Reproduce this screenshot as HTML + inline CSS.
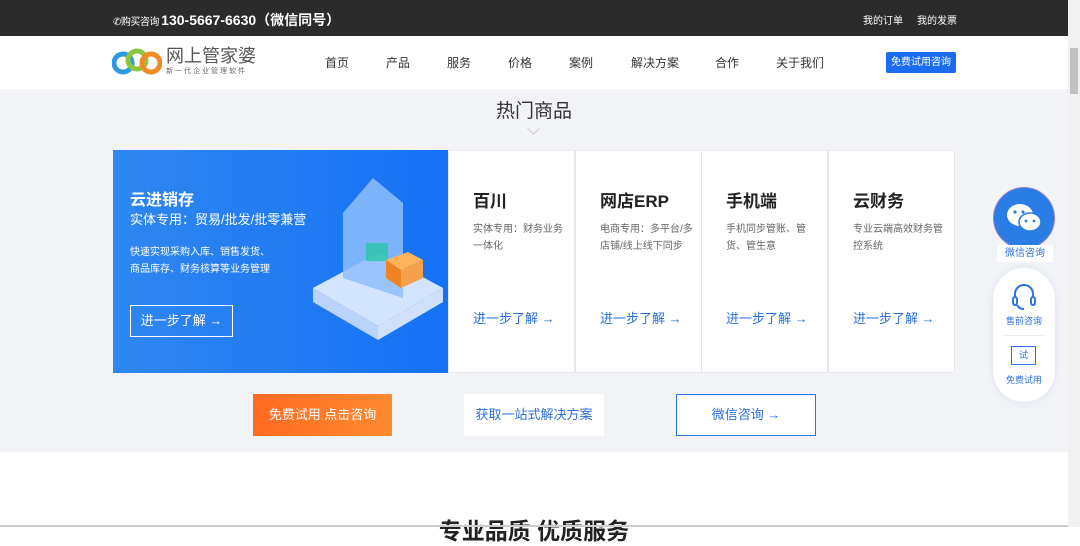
<!DOCTYPE html>
<html><head><meta charset="utf-8"><style>
*{margin:0;padding:0;box-sizing:border-box}
body{width:1080px;height:527px;overflow:hidden;position:relative;background:#fff;font-family:"Liberation Sans","Noto Sans CJK SC",sans-serif;color:#333}
.abs{position:absolute}
.top{left:0;top:0;width:1068px;height:36px;background:#2b2b2b;color:#fff}
.hdr{left:0;top:36px;width:1068px;height:53px;background:#fff;box-shadow:0 1px 3px rgba(0,0,0,.08)}
.grey{left:0;top:89px;width:1068px;height:363px;background:#f2f3f6}
.nav{font-size:12px;color:#333;top:54px}
.card{background:#fff;border:1px solid #e6e8ec;top:150px;height:223px;width:127px}
.card h3{position:absolute;left:24px;top:36px;font-size:17px;font-weight:bold;color:#222}
.card p{position:absolute;left:24px;top:70px;font-size:10px;line-height:17px;color:#666;width:96px}
.card .m{position:absolute;left:24px;top:157px;font-size:13px;color:#2a6fe0}
.scroll{left:1068px;top:0;width:12px;height:527px;background:#f1f1f1}
</style></head><body>
<div class="abs top">
 <div class="abs" style="left:113px;top:10px;font-size:10px;letter-spacing:-0.5px">&#9990;购买咨询 <span style="font-size:14px;font-weight:bold;letter-spacing:0">130-5667-6630（微信同号）</span></div>
 <div class="abs" style="left:863px;top:12px;font-size:10px">我的订单</div>
 <div class="abs" style="left:917px;top:12px;font-size:10px">我的发票</div>
</div>
<div class="abs hdr"></div>
<svg class="abs" style="left:112px;top:46px" width="50" height="32" viewBox="0 0 50 32">
<circle cx="11" cy="17" r="9" fill="none" stroke="#2d9be0" stroke-width="5"/>
<circle cx="25" cy="14" r="9" fill="none" stroke="#8cc63f" stroke-width="5"/>
<circle cx="39" cy="17" r="9" fill="none" stroke="#f08a24" stroke-width="5"/>
</svg>
<div class="abs" style="left:166px;top:42px;font-size:18px;color:#555">网上管家婆</div>
<div class="abs" style="left:166px;top:66px;font-size:7px;color:#666;letter-spacing:2px">新一代企业管理软件</div>
<div class="abs nav" style="left:325px">首页</div>
<div class="abs nav" style="left:386px">产品</div>
<div class="abs nav" style="left:447px">服务</div>
<div class="abs nav" style="left:508px">价格</div>
<div class="abs nav" style="left:569px">案例</div>
<div class="abs nav" style="left:631px">解决方案</div>
<div class="abs nav" style="left:715px">合作</div>
<div class="abs nav" style="left:776px">关于我们</div>
<div class="abs" style="left:886px;top:52px;width:70px;height:21px;background:#1a6cf0;color:#fff;font-size:10px;line-height:21px;text-align:center;border-radius:2px">免费试用咨询</div>
<div class="abs grey"></div>
<div class="abs" style="left:0;top:96px;width:1068px;text-align:center;font-size:19px;color:#333">热门商品</div>
<div class="abs" style="left:529px;top:124px;width:9px;height:9px;border-right:1.5px solid #ccc;border-bottom:1.5px solid #ccc;transform:rotate(45deg)"></div>
<div class="abs" style="left:113px;top:150px;width:336px;height:223px;background:linear-gradient(90deg,#2f87f0,#1571f5)">
 <div class="abs" style="left:17px;top:36px;font-size:16px;font-weight:bold;color:#fff">云进销存</div>
 <div class="abs" style="left:17px;top:59px;font-size:13px;color:#fff">实体专用：贸易/批发/批零兼营</div>
 <div class="abs" style="left:17px;top:94px;font-size:10px;line-height:17px;color:#fff">快速实现采购入库、销售发货、<br>商品库存、财务核算等业务管理</div>
 <div class="abs" style="left:17px;top:155px;width:103px;height:32px;border:1px solid #fff;color:#fff;font-size:13px;line-height:30px;text-align:center">进一步了解 →</div>
 <svg class="abs" style="left:195px;top:18px" width="140" height="180" viewBox="0 0 140 180">
  <path d="M5 120 L70 85 L135 120 L70 158 Z" fill="#e8f1ff" opacity=".9"/>
  <path d="M5 120 L70 158 L70 172 L5 134Z" fill="#b9d3fb"/><path d="M135 120 L70 158 L70 172 L135 134Z" fill="#cfe0fc"/>
  <path d="M35 110 L35 45 L65 10 L95 35 L95 130 Z" fill="#8ec0fb" opacity=".85"/>
  <rect x="58" y="75" width="22" height="18" fill="#28c7a8" opacity=".8"/>
  <path d="M78 92 L100 84 L115 92 L93 102Z" fill="#ffb25a"/><path d="M78 92 L93 102 L93 120 L78 110Z" fill="#f08224"/><path d="M93 102 L115 92 L115 110 L93 120Z" fill="#f5a04a"/>
 </svg>
</div>
<div class="abs card" style="left:448px"><h3>百川</h3><p>实体专用：财务业务一体化</p><div class="m">进一步了解 →</div></div>
<div class="abs card" style="left:575px"><h3>网店ERP</h3><p>电商专用：多平台/多店铺/线上线下同步</p><div class="m">进一步了解 →</div></div>
<div class="abs card" style="left:701px"><h3>手机端</h3><p>手机同步管账、管货、管生意</p><div class="m">进一步了解 →</div></div>
<div class="abs card" style="left:828px"><h3>云财务</h3><p>专业云端高效财务管控系统</p><div class="m">进一步了解 →</div></div>
<div class="abs" style="left:253px;top:394px;width:139px;height:42px;background:linear-gradient(90deg,#ff6a21,#ff8a30);color:#fff;font-size:13px;line-height:42px;text-align:center">免费试用 点击咨询</div>
<div class="abs" style="left:464px;top:394px;width:140px;height:42px;background:#fff;color:#2a6fe0;font-size:13px;line-height:42px;text-align:center">获取一站式解决方案</div>
<div class="abs" style="left:676px;top:394px;width:140px;height:42px;border:1px solid #2a74e5;background:#fff;color:#2a6fe0;font-size:13px;line-height:40px;text-align:center">微信咨询 →</div>
<div class="abs" style="left:0;top:512px;width:1068px;text-align:center;font-size:23px;font-weight:bold;color:#222">专业品质 优质服务</div>
<div class="abs" style="left:0;top:525px;width:1080px;height:2px;background:#ccc"></div>
<div class="abs" style="left:993px;top:187px;width:62px;height:62px;border-radius:50%;background:#2a7de4;border:1px solid #9b7fc8"></div>
<svg class="abs" style="left:1005px;top:202px" width="38" height="32" viewBox="0 0 38 32"><ellipse cx="15" cy="13" rx="13" ry="11" fill="#fff"/><ellipse cx="25" cy="20" rx="11" ry="9" fill="#fff" stroke="#2a7de4" stroke-width="1.5"/><circle cx="10" cy="10" r="1.6" fill="#2a7de4"/><circle cx="18" cy="10" r="1.6" fill="#2a7de4"/><circle cx="21" cy="19" r="1.4" fill="#2a7de4"/><circle cx="29" cy="19" r="1.4" fill="#2a7de4"/></svg>
<div class="abs" style="left:997px;top:245px;width:56px;background:#fff;font-size:10px;color:#2a6fe0;text-align:center;line-height:17px">微信咨询</div>
<div class="abs" style="left:993px;top:268px;width:62px;height:134px;border-radius:31px;background:#fff;box-shadow:0 0 8px rgba(60,110,220,.12)"></div>
<svg class="abs" style="left:1008px;top:282px" width="32" height="30" viewBox="0 0 32 30"><path d="M7 16 V12 a9 9 0 0 1 18 0 V16" fill="none" stroke="#2a74e5" stroke-width="2"/><rect x="5" y="15" width="4" height="8" rx="2" fill="none" stroke="#2a74e5" stroke-width="2"/><rect x="23" y="15" width="4" height="8" rx="2" fill="none" stroke="#2a74e5" stroke-width="2"/><path d="M9 23 q2 4 7 4" fill="none" stroke="#2a74e5" stroke-width="2"/></svg>
<div class="abs" style="left:993px;top:314px;width:62px;text-align:center;font-size:9px;color:#2a6fe0">售前咨询</div>
<div class="abs" style="left:1002px;top:335px;width:44px;height:1px;background:#eee"></div>
<div class="abs" style="left:1011px;top:346px;width:25px;height:19px;border:1.5px solid #2a74e5;font-size:9px;color:#2a6fe0;text-align:center;line-height:16px">试</div>
<div class="abs" style="left:993px;top:373px;width:62px;text-align:center;font-size:9px;color:#2a6fe0">免费试用</div>
<div class="abs scroll"><div class="abs" style="left:2px;top:48px;width:8px;height:46px;background:#c1c1c1"></div></div>
</body></html>
